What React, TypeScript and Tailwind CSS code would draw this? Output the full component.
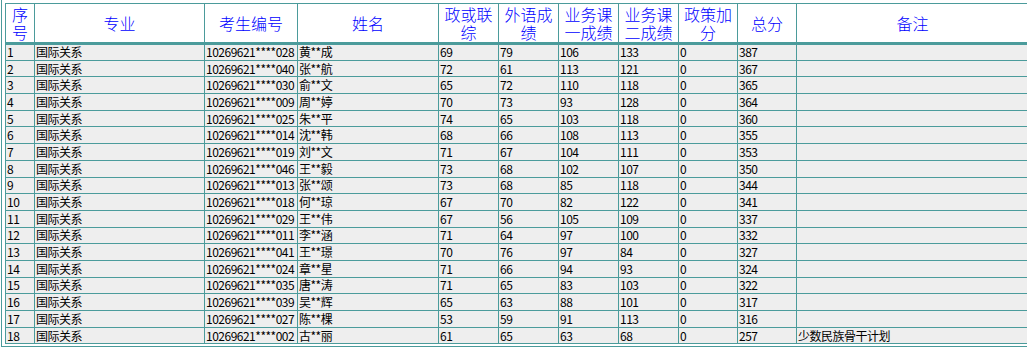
import React from 'react'

const rows: string[][] = [
  ['1', '国际关系', '10269621****028', '黄**成', '69', '79', '106', '133', '0', '387', ''],
  ['2', '国际关系', '10269621****040', '张**航', '72', '61', '113', '121', '0', '367', ''],
  ['3', '国际关系', '10269621****030', '俞**文', '65', '72', '110', '118', '0', '365', ''],
  ['4', '国际关系', '10269621****009', '周**婷', '70', '73', '93', '128', '0', '364', ''],
  ['5', '国际关系', '10269621****025', '朱**平', '74', '65', '103', '118', '0', '360', ''],
  ['6', '国际关系', '10269621****014', '沈**韩', '68', '66', '108', '113', '0', '355', ''],
  ['7', '国际关系', '10269621****019', '刘**文', '71', '67', '104', '111', '0', '353', ''],
  ['8', '国际关系', '10269621****046', '王**毅', '73', '68', '102', '107', '0', '350', ''],
  ['9', '国际关系', '10269621****013', '张**颂', '73', '68', '85', '118', '0', '344', ''],
  ['10', '国际关系', '10269621****018', '何**琼', '67', '70', '82', '122', '0', '341', ''],
  ['11', '国际关系', '10269621****029', '王**伟', '67', '56', '105', '109', '0', '337', ''],
  ['12', '国际关系', '10269621****011', '李**涵', '71', '64', '97', '100', '0', '332', ''],
  ['13', '国际关系', '10269621****041', '王**璟', '70', '76', '97', '84', '0', '327', ''],
  ['14', '国际关系', '10269621****024', '章**星', '71', '66', '94', '93', '0', '324', ''],
  ['15', '国际关系', '10269621****035', '唐**涛', '71', '65', '83', '103', '0', '322', ''],
  ['16', '国际关系', '10269621****039', '吴**辉', '65', '63', '88', '101', '0', '317', ''],
  ['17', '国际关系', '10269621****027', '陈**棵', '53', '59', '91', '113', '0', '316', ''],
  ['18', '国际关系', '10269621****002', '古**丽', '61', '65', '63', '68', '0', '257', '少数民族骨干计划'],
]

const headers = ['序号', '专业', '考生编号', '姓名', '政或联综', '外语成绩', '业务课一成绩', '业务课二成绩', '政策加分', '总分', '备注']
const widths = ['w-[29px]', 'w-[170px]', 'w-[93px]', 'w-[141px]', 'w-[60px]', 'w-[60px]', 'w-[60px]', 'w-[60px]', 'w-[59px]', 'w-[59px]', 'w-[232px]']

export default function App() {
  return (
    <div className="w-[1027px] h-[349px] overflow-hidden bg-white" style={{ fontFamily: '"Noto Sans CJK SC", "Noto Sans", sans-serif' }}>
      <div className="ml-[1px] w-[1040px] border-l border-b border-[#4b9b9b] pl-[3px] pt-[3px] pb-[2px] bg-white">
        <table className="table-fixed border-collapse w-[1023px]">
          <colgroup>
            {widths.map((w, i) => (
              <col key={i} className={w} />
            ))}
          </colgroup>
          <thead>
            <tr className="h-[40px] bg-white border-b-[3px] border-[#4b9b9b]">
              {headers.map((h) => (
                <th key={h} className="border border-[#4b9b9b] p-0 text-[16px] leading-[18px] font-light text-[#0000ff] text-center align-middle">
                  {h}
                </th>
              ))}
            </tr>
          </thead>
          <tbody>
            {rows.map((r) => (
              <tr key={r[0]} className="h-[16.7px] bg-[#eeeeee]">
                {r.map((c, i) => (
                  <td key={i} className="border border-[#4b9b9b] px-[1px] py-0 text-[12px] leading-[14px] text-black tracking-[-0.5px] whitespace-nowrap overflow-hidden align-middle">
                    {c}
                  </td>
                ))}
              </tr>
            ))}
          </tbody>
        </table>
      </div>
    </div>
  )
}
